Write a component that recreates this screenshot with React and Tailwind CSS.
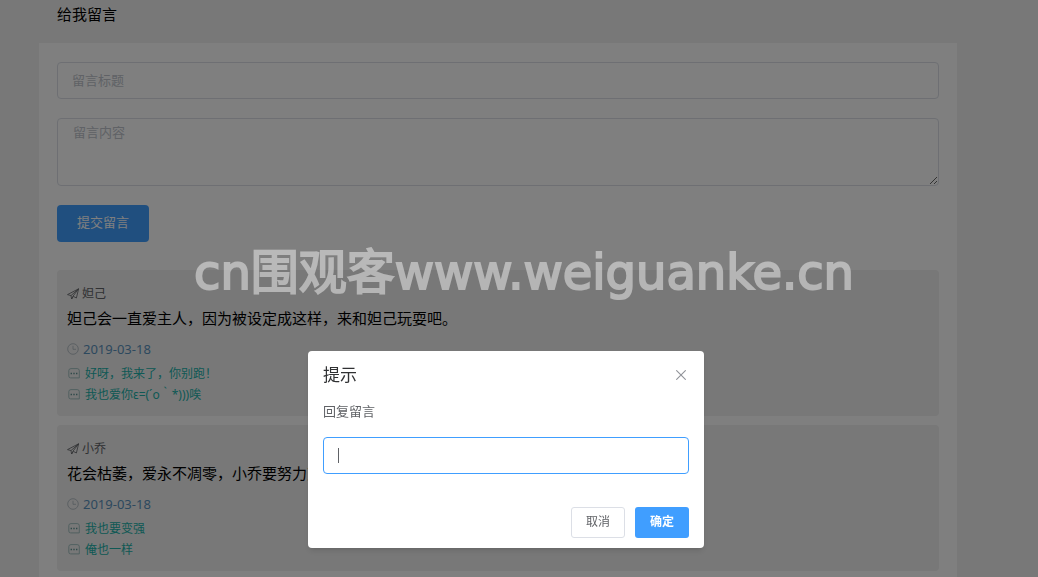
import { useState } from "react";

const messages = [
  {
    name: "妲己",
    text: "妲己会一直爱主人，因为被设定成这样，来和妲己玩耍吧。",
    date: "2019-03-18",
    replies: ["好呀，我来了，你别跑！", "我也爱你ε=(´o｀*)))唉"],
  },
  {
    name: "小乔",
    text: "花会枯萎，爱永不凋零，小乔要努力变强。",
    date: "2019-03-18",
    replies: ["我也要变强", "俺也一样"],
  },
];

function PlaneIcon() {
  return (
    <svg viewBox="0 0 12 12" className="size-3" fill="none" stroke="currentColor" strokeWidth="0.8" strokeLinejoin="round" aria-hidden="true">
      <path d="M11.6.8 9.4 10 6.4 8.4 4.6 11 4 7.6.5 6.6z" />
      <path d="M11.6.8 4 7.6M11.6.8 6 8.2M4.6 11 6 8.2" />
    </svg>
  );
}

function ClockIcon() {
  return (
    <svg viewBox="0 0 12 12" className="size-3" fill="none" stroke="currentColor" strokeWidth="0.8" aria-hidden="true">
      <circle cx="6" cy="6" r="5.3" />
      <path d="M6 2.8V6.3H9" />
    </svg>
  );
}

function ReplyIcon() {
  return (
    <svg viewBox="0 0 12 12" className="size-3" fill="none" stroke="currentColor" strokeWidth="0.8" aria-hidden="true">
      <path d="M3 .6H9.2Q11.3.6 11.3 2.7V9.9H2.6Q.8 9.9.8 8.1V2.7Q.8.6 3 .6z" />
      <path d="M2.6 5.5H4M5.3 5.5H6.7M8 5.5H9.4" strokeWidth="1.3" className="stroke-[#5f9595]" />
    </svg>
  );
}

function Message({ item }) {
  return (
    <li className="rounded bg-[#f0f0f0] px-2.5 pt-3 pb-[11px]">
      <div className="flex items-center gap-[3px] text-xs leading-6 text-[#606266]">
        <PlaneIcon />
        <span>{item.name}</span>
      </div>
      <p className="text-[15px] leading-6 text-black">{item.text}</p>
      <div className="mt-[7px] flex items-center gap-1 text-[13px] leading-6 text-[#5a92bd]">
        <span className="text-[#a8b4bc]"><ClockIcon /></span>
        <time dateTime={item.date}>{item.date}</time>
      </div>
      <ul className="mt-0.5">
        {item.replies.map((reply) => (
          <li key={reply} className="flex items-center gap-[5px] pl-px text-xs leading-[21px] text-[#20b2aa]">
            <span className="text-[#8fb5b5]"><ReplyIcon /></span>
            <span>{reply}</span>
          </li>
        ))}
      </ul>
    </li>
  );
}

function ReplyDialog({ onClose }) {
  return (
    <div className="fixed inset-0 flex items-start justify-center bg-black/50 pt-[351px] pr-[26px]">
      <div role="dialog" aria-labelledby="dialog-title" className="w-[396px] rounded bg-white px-[15px] pt-3 pb-2.5 shadow-md">
        <div className="flex items-center justify-between">
          <h2 id="dialog-title" className="text-[17px] leading-6 text-[#303133]">提示</h2>
          <button type="button" aria-label="关闭" onClick={onClose} className="grid size-4 place-items-center text-[#909399]">
            <svg viewBox="0 0 10 10" className="size-2.5" stroke="currentColor" strokeWidth="1.1" aria-hidden="true">
              <path d="M.3.3 9.7 9.7M9.7.3.3 9.7" />
            </svg>
          </button>
        </div>
        <label htmlFor="reply" className="mt-3 block text-[13px] leading-6 text-[#606266]">回复留言</label>
        <div className="relative mt-3.5">
          <input id="reply" className="block h-[37px] w-full rounded border border-[#409eff] bg-white px-[15px] text-[13px] text-[#606266] outline-none" />
          <span className="absolute top-[11px] left-[15px] h-[15px] w-px bg-[#606266]" />
        </div>
        <div className="mt-[33px] flex justify-end gap-2.5 text-xs">
          <button type="button" onClick={onClose} className="h-[31px] w-[54px] rounded-[3px] border border-[#dcdfe6] bg-white pb-0.5 text-[#606266]">取消</button>
          <button type="button" onClick={onClose} className="h-[31px] w-[54px] rounded-[3px] bg-[#409eff] pb-0.5 font-bold text-white">确定</button>
        </div>
      </div>
    </div>
  );
}

export default function App() {
  const [open, setOpen] = useState(true);
  return (
    <div className="flex h-screen flex-col overflow-hidden bg-[#f0f0f0] font-['Noto_Sans','Noto_Sans_CJK_SC',sans-serif]">
      <main className="mr-[81px] ml-[39px] flex grow flex-col">
        <h1 className="px-[18px] pt-0.5 pb-[17px] text-[15px] leading-6 text-black">给我留言</h1>
        <section className="grow bg-white px-[18px] pt-[19px]">
          <form className="flex flex-col items-start gap-[19px]" onSubmit={(e) => e.preventDefault()}>
            <input aria-label="留言标题" placeholder="留言标题" className="block h-[37px] w-full rounded border border-[#dcdfe6] px-3.5 pb-0.5 text-[13px] placeholder:text-[#c0c4cc]" />
            <textarea aria-label="留言内容" placeholder="留言内容" className="block h-[68px] w-full resize-y rounded border border-[#dcdfe6] px-[15px] py-1 text-[13px] leading-[18px] placeholder:text-[#c0c4cc]" />
            <button type="submit" className="h-[37px] rounded bg-[#409eff] px-5 pb-0.5 text-[13px] text-white">提交留言</button>
          </form>
          <ul className="mt-7 flex flex-col gap-[9px]">
            {messages.map((item) => (
              <Message key={item.name} item={item} />
            ))}
          </ul>
        </section>
      </main>
      {open && <ReplyDialog onClose={() => setOpen(false)} />}
      <div className="pointer-events-none fixed top-[240px] left-[194px] flex h-16 items-center font-['DejaVu_Sans','Noto_Sans_CJK_SC',sans-serif] text-[48px] whitespace-nowrap text-white opacity-45 [-webkit-text-stroke:2px_white]">
        cn围观客www.weiguanke.cn
      </div>
    </div>
  );
}
